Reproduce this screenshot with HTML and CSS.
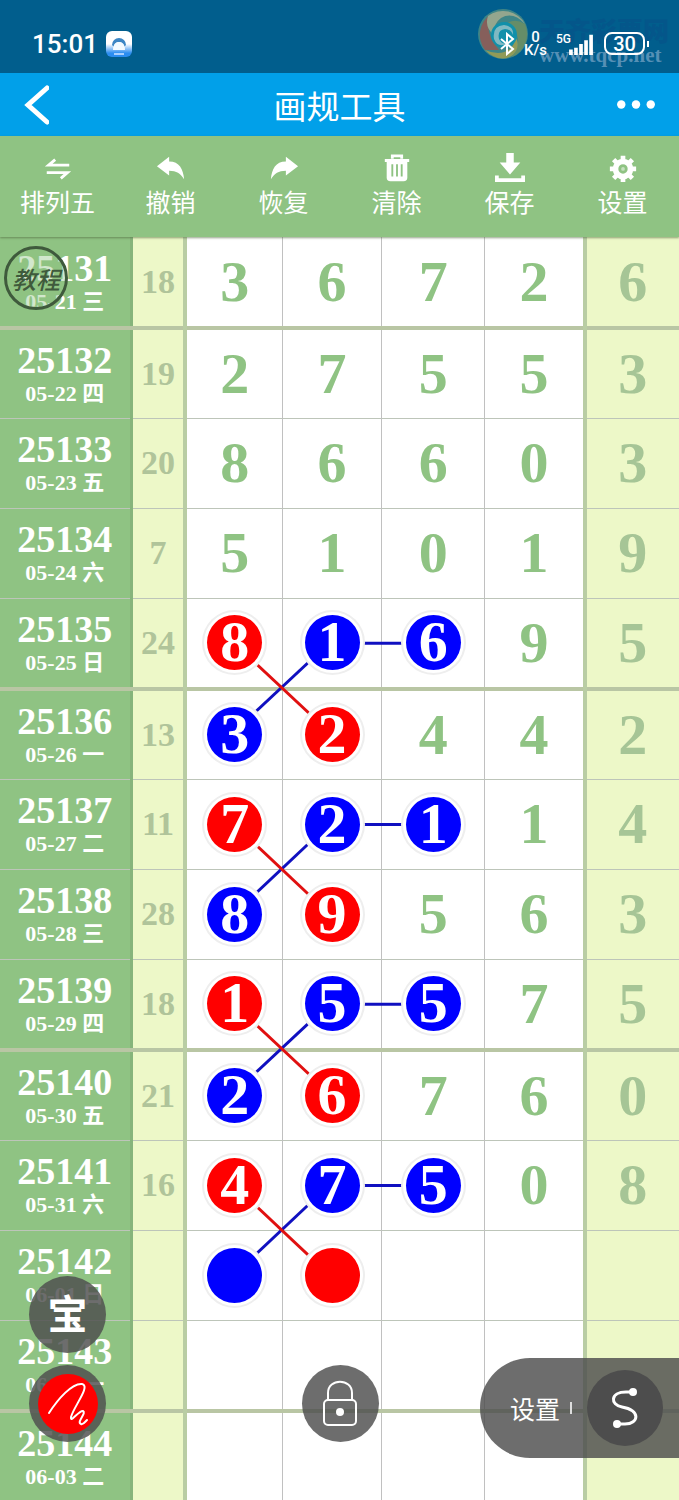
FILE: index.html
```html
<!DOCTYPE html>
<html lang="zh-CN">
<head>
    <meta charset="UTF-8">
    <meta name="viewport" content="width=device-width, initial-scale=1.0">
    <title>画规工具</title>
    <link rel="stylesheet" href="styles.css">
</head>
<body>
    <div class="status">
        <span class="time">15:01</span>
        <svg class="app-icon" viewBox="0 0 26 26">
            <defs>
                <linearGradient id="appbg" x1="0" y1="0" x2="0" y2="1">
                    <stop offset="0.5" stop-color="#fff"/><stop offset="0.85" stop-color="#2b8df0"/>
                </linearGradient>
            </defs>
            <rect width="26" height="26" rx="6" fill="url(#appbg)"/>
            <path d="M6 14a7 7 0 1 1 14 0l-2 2a5 5 0 1 0-10 0z" fill="#3c86c4"/>
            <path d="M7 19q0-8 6-8t6 8z" fill="#f2faff"/>
            <path d="M8 23h10" stroke="#a9d0ff" stroke-width="2"/>
        </svg>
        <div class="watermark">
            <svg viewBox="0 0 52 52">
                <circle cx="26" cy="26" r="25" fill="#4f8f86"/>
                <path d="M8 42A25 25 0 0 1 14 6q-8 18 8 36z" fill="#a8604f"/>
                <path d="M11 8a25 25 0 0 1 37 8q-12-13-24-6-9 7-6 18Q7 20 11 8z" fill="#b9b98f"/>
                <path d="M48 16a25 25 0 0 1-13 33q10-13 4-24-6-8-14-5 10-12 23-4z" fill="#7f9960"/>
                <path d="M8 42q16 7 26-2 5-6 3-13 8 10-1 20-14 9-28-5z" fill="#b5ab4c"/>
                <circle cx="27" cy="27" r="13" fill="#159db2"/>
                <path d="M17 31q-2-13 10-14 10 1 9 10-2-6-8-6-8 1-6 10 3 6 9 4-10 6-14-4z" fill="#9fd0d0"/>
            </svg>
            <div class="mark-text"><b>天齐彩票网</b><i>www.tqcp.net</i></div>
        </div>
        <div class="status-right">
            <svg class="bluetooth" viewBox="0 0 16 24"><path d="M2 7l12 10-6 5V2l6 5L2 17" fill="none" stroke="#fff" stroke-width="2"/></svg>
            <span class="speed">0<br>K/s</span>
            <div class="signal">
                <span>5G</span>
                <svg viewBox="0 0 28 24"><path d="M3 24v-6M8.500 24v-8M14 24V12M19.500 24V8M25 24V2" stroke="#fff" stroke-width="4"/></svg>
            </div>
            <span class="battery">30</span>
        </div>
    </div>
    <header>
        <button class="back" aria-label="返回"><svg viewBox="0 0 26 42"><path d="M24 4L5 21l19 17" fill="none" stroke="#fff" stroke-width="5" stroke-linecap="round"/></svg></button>
        <h1>画规工具</h1>
        <button class="more" aria-label="更多"><svg viewBox="0 0 38 10"><g fill="#fff"><circle cx="5" cy="5" r="4"/><circle cx="19" cy="5" r="4"/><circle cx="33" cy="5" r="4"/></g></svg></button>
    </header>
    <nav class="tools">
        <button><svg viewBox="0 0 32 32"><path d="M28 13H6l7-6M4 21h22l-7 6" fill="none" stroke="#fff" stroke-width="3"/></svg>排列五</button>
        <button><svg viewBox="0 0 32 32"><path d="M1 14L14 4v5c11 0 15 8 16 19-4-6-8-9-16-9v5z" fill="#fff"/></svg>撤销</button>
        <button><svg viewBox="0 0 32 32"><path d="M31 14L18 4v5C7 9 3 17 2 28c4-6 8-9 16-9v5z" fill="#fff"/></svg>恢复</button>
        <button><svg viewBox="0 0 32 32"><path d="M11 6V3h10v3M3 8h26" fill="none" stroke="#fff" stroke-width="3"/><path d="M5 8h22v18q0 4-4 4H9q-4 0-4-4z" fill="#fff"/><path d="M11 12v13M16 12v13M21 12v13" stroke="#8fc383" stroke-width="2"/></svg>清除</button>
        <button><svg viewBox="0 0 32 32"><path d="M12 0h8v10h7L16 23 5 10h7z" fill="#fff"/><path d="M2 24v5h28v-5" fill="none" stroke="#fff" stroke-width="4"/></svg>保存</button>
        <button><svg viewBox="0 0 32 32"><circle cx="16" cy="17" r="8" fill="none" stroke="#fff" stroke-width="6"/><circle cx="16" cy="17" r="2" fill="#fff" opacity="0.5"/><path d="M16 3v5M16 26v5M2 17h5M25 17h5M6 7l4 4M22 23l4 4M26 7l-4 4M10 23l-4 4" stroke="#fff" stroke-width="5"/></svg>设置</button>
    </nav>
    <main>
        <table>
            <colgroup><col class="c-date"><col class="c-sum"><col class="c-n1"><col class="c-n2"><col class="c-n3"><col class="c-n4"><col class="c-n5"></colgroup>
            <tbody id="rows"></tbody>
        </table>
    </main>

    <button class="tutorial">教程</button>
    <button class="float treasure">宝</button>
    <button class="float pen" aria-label="画笔"><svg viewBox="0 0 60 60"><circle cx="30" cy="30" r="30" fill="#f00"/><path d="M11 39C20 25 34 9 44 10c9 2-8 22-11 33-1 7 8-7 12-6 4 2-7 11-2 13 2 1 4-2 6-4" fill="none" stroke="#fff" stroke-width="2" stroke-linecap="round"/></svg></button>
    <button class="float lock" aria-label="锁定"><svg viewBox="0 0 36 48"><path d="M6 20v-7C6-2 30-2 30 13v7" fill="none" stroke="#fff" stroke-width="2"/><rect x="2" y="20" width="32" height="25" rx="4" fill="none" stroke="#fff" stroke-width="2"/><circle cx="18" cy="32" r="4" fill="#fff"/></svg></button>
    <div class="line-bar">
        <button class="line-set">设置</button>
        <span class="tick"></span>
        <button class="curve" aria-label="连线"><svg viewBox="0 0 28 42"><path d="M22 5h-7C-1 5-1 18 11 20c19 3 17 17 3 17H6" fill="none" stroke="#fff" stroke-width="3"/><circle cx="22" cy="5" r="4" fill="#fff"/><circle cx="6" cy="37" r="4" fill="#fff"/></svg></button>
    </div>

    <script>
    // 期号, 日期, 和值, 号码
    const data = [
        ['25131', '05-21 三', '18', '36726'],
        ['25132', '05-22 四', '19', '27553'],
        ['25133', '05-23 五', '20', '86603'],
        ['25134', '05-24 六', '7', '51019'],
        ['25135', '05-25 日', '24', '81695'],
        ['25136', '05-26 一', '13', '32442'],
        ['25137', '05-27 二', '11', '72114'],
        ['25138', '05-28 三', '28', '89563'],
        ['25139', '05-29 四', '18', '15575'],
        ['25140', '05-30 五', '21', '26760'],
        ['25141', '05-31 六', '16', '47508'],
        ['25142', '06-01 日', '', ''],
        ['25143', '06-02 一', '', ''],
        ['25144', '06-03 二', '', '']
    ];
    // 连线: 占 2x2 格
    const cross = `<svg class="cross"><line x1="25%" y1="75%" x2="75%" y2="25%" stroke="#1010c0"/><line x1="25%" y1="25%" x2="75%" y2="75%" stroke="#e01010"/></svg>`;
    const link = `<svg class="link"><line x1="25%" y1="50%" x2="75%" y2="50%" stroke="#1010c0"/></svg>`;
    const colors = [['red', 'blue', 'blue'], ['blue', 'red']];

    document.getElementById('rows').innerHTML = data.map((row, r) => {
        let cells = '';
        for (let c = 0; c < 5; c++) {
            const num = row[3][c] || '';
            let color = '', lines = '';
            if (r >= 4 && r <= 11) {
                color = colors[r % 2][c];
                if (r % 2 === 0 && c === 0) lines = cross;
                if (r % 2 === 0 && c === 1) lines = link;
            }
            cells += `<td class="num">${lines}${color ? `<span class="ball ${color}">${num}</span>` : num}</td>`;
        }
        return `<tr class="${r % 4 === 0 ? 'week' : ''}"><th scope="row"><b>${row[0]}</b><small>${row[1]}</small></th><td class="sum">${row[2]}</td>${cells}</tr>`;
    }).join('');
    </script>
</body>
</html>
```
FILE: styles.css
```css
* {
    box-sizing: border-box;
}
body {
    margin: 0;
    height: 100vh;
    overflow: hidden;
    display: flex;
    flex-direction: column;
    background: #fff;
    font-family: "Noto Sans CJK SC", sans-serif;
    color: #fff;
}
button {
    border: none;
    padding: 0;
    background: none;
    color: #fff;
    font-family: inherit;
    cursor: pointer;
}
svg {
    display: block;
}

/* 状态栏 */
.status {
    position: relative;
    flex: none;
    height: 73px;
    padding: 14px 34px 0 32px;
    background: #015e8d;
    display: flex;
    align-items: center;
    font-family: Roboto, sans-serif;
    font-weight: 500;
}
.time {
    font-size: 26px;
}
.app-icon {
    width: 26px;
    height: 26px;
    margin-left: 8px;
}
.status-right {
    position: relative;
    margin-left: auto;
    display: flex;
    align-items: center;
    gap: 9px;
}
.bluetooth {
    width: 16px;
    height: 24px;
}
.speed {
    font-size: 15px;
    line-height: 13px;
    text-align: center;
}
.signal {
    display: flex;
    align-items: flex-end;
    font-size: 12px;
}
.signal span {
    align-self: flex-start;
    line-height: 12px;
    margin-right: -4px;
}
.signal svg {
    width: 28px;
    height: 22px;
}
.battery {
    position: relative;
    width: 41px;
    height: 23px;
    border: 2px solid #fff;
    border-radius: 8px;
    font-size: 20px;
    line-height: 20px;
    text-align: center;
}
.battery::after {
    content: "";
    position: absolute;
    right: -6px;
    top: 7px;
    width: 2px;
    height: 6px;
    background: #fff;
}
.watermark {
    position: absolute;
    top: 8px;
    right: 11px;
    display: flex;
    gap: 10px;
    opacity: 0.8;
}
.watermark svg {
    width: 52px;
    height: 52px;
}
.mark-text {
    width: 129px;
    padding-top: 8px;
}
.mark-text b, .mark-text i {
    display: block;
    white-space: nowrap;
}
.mark-text b {
    font: 900 26px/28px "Noto Sans CJK SC", sans-serif;
    color: #05558a;
}
.mark-text i {
    font: bold 21px/22px "Liberation Serif", serif;
    color: #6c9dc0;
}

header {
    flex: none;
    height: 63px;
    padding: 0 23px;
    background: #01a0e9;
    display: flex;
    align-items: center;
    justify-content: space-between;
}
h1 {
    margin: 0;
    font-size: 33px;
    line-height: 44px;
    font-weight: 400;
}
.back, .more {
    width: 40px;
}
.back svg {
    width: 26px;
    height: 42px;
}
.more svg {
    width: 40px;
    height: 11px;
}

.tools {
    flex: none;
    height: 101px;
    padding: 17px 0 0 1px;
    background: #8fc383;
    display: grid;
    grid-template-columns: repeat(6, 1fr);
    align-items: start;
    position: relative;
    z-index: 3;
    box-shadow: 0 1px 2px rgba(80, 100, 60, 0.6);
}
.tools button {
    display: flex;
    flex-direction: column;
    align-items: center;
    font-size: 25px;
    line-height: 36px;
}
.tools svg {
    width: 30px;
    height: 30px;
}

/* 走势表 */
main {
    flex: 1;
    min-height: 0;
    overflow: hidden;
}
table {
    width: 100%;
    table-layout: fixed;
    border-collapse: collapse;
    font-family: "Liberation Serif", "Noto Sans CJK SC", serif;
    font-weight: bold;
}
.c-date { width: 19.3%; }
.c-sum { width: 8%; }
.c-n1 { width: 14.3%; }
.c-n2 { width: 14.6%; }
.c-n3 { width: 15.2%; }
.c-n4 { width: 14.7%; }
.c-n5 { width: 13.9%; }
tr {
    height: 90px;
    border-bottom: 1px solid rgba(90, 110, 80, 0.4);
}
tr.week {
    height: 91px;
    border-bottom: 4px solid #b9c6a4;
}
th, td {
    position: relative;
    padding: 0;
    text-align: center;
    vertical-align: middle;
}
th {
    background: #8fc383;
    border-right: 3px solid #86b47b;
}
th b {
    display: block;
    font-size: 38px;
    line-height: 40px;
}
th small {
    display: block;
    font-size: 22px;
    line-height: 28px;
}
.sum {
    background: #edf8c8;
    border-right: 4px solid #b9cda4;
    color: #b0c49a;
    font-size: 34px;
}
.num {
    border-right: 1px solid #c0c0c0;
    color: #8fc383;
    font-size: 58px;
    line-height: 60px;
}
.num:nth-child(6) {
    border-right: 4px solid #b9cda4;
}
.num:last-child {
    border-right: none;
    background: #edf8c8;
    color: #a6c596;
}
.ball {
    position: relative;
    z-index: 2;
    display: block;
    width: 55px;
    height: 55px;
    margin: 0 auto;
    border-radius: 50%;
    color: #fff;
    line-height: 54px;
    box-shadow: 0 0 0 3px #fff, 0 0 0 5px #eee;
}
.red { background: #f00; }
.blue { background: #00f; }
.cross, .link {
    position: absolute;
    z-index: 1;
    top: 0;
    left: 0;
    width: 200%;
    height: 200%;
    stroke-width: 3px;
    pointer-events: none;
}
.link {
    height: 100%;
}

/* 悬浮按钮 */
.tutorial {
    position: absolute;
    z-index: 4;
    top: 246px;
    left: 4px;
    width: 64px;
    height: 64px;
    border: 3px solid #3f5a3c;
    border-radius: 50%;
    background: rgba(143, 195, 131, 0.4);
    color: #3f5a3c;
    font-size: 24px;
    font-style: italic;
    font-weight: 500;
}
.float {
    position: absolute;
    z-index: 4;
    width: 77px;
    height: 77px;
    border-radius: 50%;
    background: rgba(77, 77, 77, 0.82);
    display: flex;
    align-items: center;
    justify-content: center;
}
.treasure {
    left: 29px;
    bottom: 147px;
    padding-bottom: 6px;
    font-size: 40px;
    font-weight: 700;
}
.pen {
    left: 29px;
    bottom: 58px;
}
.pen svg {
    width: 60px;
    height: 60px;
}
.lock {
    left: 50%;
    bottom: 58px;
    margin-left: -38px;
}
.lock svg {
    width: 36px;
    height: 48px;
}
.line-bar {
    position: absolute;
    z-index: 4;
    right: 0;
    bottom: 42px;
    width: 199px;
    height: 100px;
    padding: 0 16px 0 30px;
    border-radius: 50px 0 0 50px;
    background: rgba(77, 77, 77, 0.82);
    display: flex;
    align-items: center;
}
.line-set {
    font-size: 25px;
}
.tick {
    width: 2px;
    height: 12px;
    margin-left: 10px;
    background: #ddd;
}
.curve {
    width: 76px;
    height: 76px;
    margin-left: auto;
    border-radius: 50%;
    background: #4d4d4d;
    display: flex;
    align-items: center;
    justify-content: center;
}
.curve svg {
    width: 28px;
    height: 42px;
}
```
